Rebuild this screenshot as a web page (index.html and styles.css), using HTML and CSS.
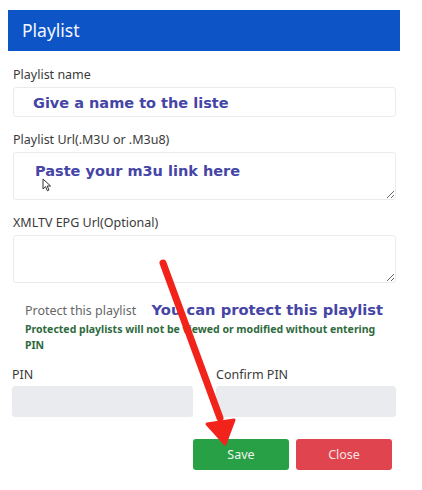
FILE: index.html
```html
<!DOCTYPE html>
<html lang="en">
<head>
    <meta charset="UTF-8">
    <meta name="viewport" content="width=device-width, initial-scale=1.0">
    <title>Playlist</title>
    <link rel="stylesheet" href="styles.css">
</head>
<body>
    <div class="modal">
        <div class="modal-header">Playlist</div>

        <div class="modal-body">
            <div class="form-group first">
                <label for="name">Playlist name</label>
                <input type="text" id="name" class="field" placeholder="Give a name to the liste">
            </div>

            <div class="form-group">
                <label for="url">Playlist Url(.M3U or .M3u8)</label>
                <div class="cursor-wrap">
                    <textarea id="url" class="field area" placeholder="Paste your m3u link here"></textarea>
                    <!-- mouse pointer from the capture -->
                    <svg class="cursor" width="10" height="14" viewBox="0 0 10 14">
                        <path d="M1 1 L1 11 L3.5 8.6 L5.4 12.8 L7 12 L5.2 8 L8.6 8 Z" fill="#fff" stroke="#333" stroke-width="1"/>
                    </svg>
                </div>
            </div>

            <div class="form-group">
                <label for="epg">XMLTV EPG Url(Optional)</label>
                <textarea id="epg" class="field area"></textarea>
            </div>

            <div class="protect">
                <span class="protect-label">Protect this playlist</span>
                <span class="note-blue">You can protect this playlist</span>
            </div>
            <p class="protect-help">Protected playlists will not be viewed or modified without entering PIN</p>

            <div class="pin-row">
                <div class="pin-col">
                    <label for="pin">PIN</label>
                    <input type="password" id="pin" class="field pin" disabled>
                </div>
                <div class="pin-col">
                    <label for="pin2">Confirm PIN</label>
                    <input type="password" id="pin2" class="field pin" disabled>
                </div>
            </div>

            <div class="actions">
                <button class="btn btn-save">Save</button>
                <button class="btn btn-close">Close</button>
            </div>
        </div>
    </div>

    <!-- red arrow drawn over the screenshot -->
    <svg class="arrow" width="422" height="490" viewBox="0 0 422 490">
        <line x1="163" y1="263" x2="220" y2="418" stroke="#f2231b" stroke-width="7" stroke-linecap="round"/>
        <polygon points="207,424 234,420 225,444" fill="#f2231b" stroke="#f2231b" stroke-width="3" stroke-linejoin="round"/>
    </svg>
</body>
</html>
```

FILE: styles.css
```css
body {
    margin: 0;
    background: #fff;
    font-family: 'Noto Sans', 'Open Sans', sans-serif;
    color: #333;
    position: relative;
    width: 422px;
    height: 490px;
    overflow: hidden;
}
.modal {
    width: 392px;
    margin: 10px 0 0 8px;
}
.modal-header {
    background: #0d54c7;
    color: #f4f7ff;
    height: 41px;
    line-height: 41px;
    padding: 0 14px;
    font-size: 17.5px;
}
.modal-body {
    padding: 0 4px 0 5px;
}
.form-group {
    margin-top: 14px;
}
.form-group.first {
    margin-top: 15px;
}
label {
    display: block;
    font-size: 12.5px;
    line-height: 18px;
    color: #3a3a3a;
    margin-bottom: 3px;
}
.field {
    display: block;
    box-sizing: border-box;
    width: 100%;
    height: 30px;
    border: 1px solid #ebebeb;
    border-radius: 3px;
    background: #fff;
    padding: 2px 19px 0;
    font-family: 'DejaVu Sans', Verdana, sans-serif;
    font-size: 14.5px;
    font-weight: bold;
    color: #4545a6;
}
.field::placeholder {
    color: #4545a6;
    opacity: 1;
}
.area {
    height: 48px;
    resize: vertical;
    padding: 10px 21px;
}
.cursor-wrap {
    position: relative;
}
.cursor {
    position: absolute;
    left: 29px;
    top: 26px;
}
.protect {
    margin-top: 16px;
    padding-left: 12px;
    line-height: 20px;
}
.protect-label {
    font-size: 12.5px;
    color: #666;
}
.note-blue {
    font-family: 'DejaVu Sans', Verdana, sans-serif;
    font-weight: bold;
    font-size: 14.7px;
    color: #4545a6;
    margin-left: 11px;
}
.protect-help {
    margin: 0;
    padding-left: 12px;
    font-size: 10.5px;
    font-weight: bold;
    line-height: 16px;
    color: #2e6a3d;
    padding-right: 10px;
}
.pin-row {
    display: grid;
    grid-template-columns: 181px 180px;
    column-gap: 23px;
    margin-top: 13px;
    margin-left: -1px;
}
.pin-col label {
    margin-bottom: 2px;
}
.pin {
    background: #e9ebee;
    border-color: #e9ebee;
    height: 31px;
}
.actions {
    display: flex;
    justify-content: flex-end;
    gap: 7px;
    margin-top: 22px;
    padding-right: 4px;
}
.btn {
    width: 96px;
    height: 31px;
    border: none;
    border-radius: 3px;
    color: #eef6ee;
    font-family: 'Noto Sans', sans-serif;
    font-size: 12.5px;
    cursor: pointer;
}
.btn-save {
    background: #27a046;
}
.btn-close {
    background: #e0444f;
    color: #fbe3e3;
}
.arrow {
    position: absolute;
    left: 0;
    top: 0;
    pointer-events: none;
}
```
